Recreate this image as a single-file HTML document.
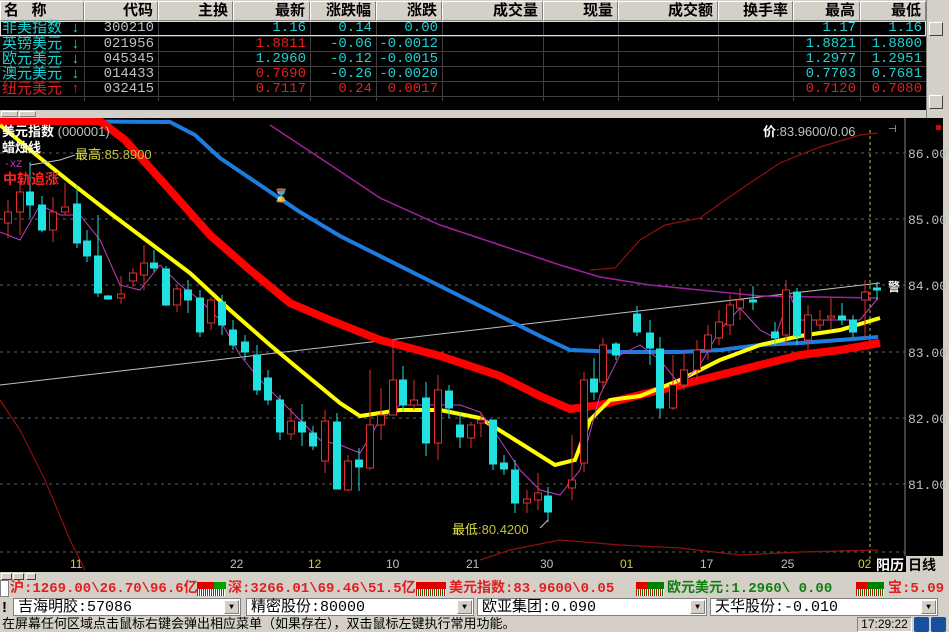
<!DOCTYPE html>
<html><head><meta charset="utf-8"><style>
*{margin:0;padding:0;box-sizing:border-box}
body{width:949px;height:632px;overflow:hidden;background:#d4d0c8;font-family:"Liberation Sans","Noto Sans CJK SC",sans-serif;position:relative}
.abs{position:absolute}
.hdr{position:absolute;top:0;left:0;width:926px;height:21px;background:#d4d0c8}
.hc{position:absolute;top:1px;height:20px;border-right:1px solid #808080;border-bottom:1px solid #808080;border-left:1px solid #fff;border-top:1px solid #fff;font-size:15px;font-weight:bold;color:#000;text-align:right;padding-right:4px;line-height:18px;font-family:"Liberation Sans","Noto Sans CJK SC",sans-serif}
.tbl{position:absolute;top:21px;left:0;width:926px;height:89px;background:#000}
.row{position:absolute;left:0;width:926px;height:15px;font-family:"Liberation Mono","Noto Sans CJK SC",monospace;font-size:14px;line-height:15px}
.cell{position:absolute;top:0;text-align:right;padding-right:4px}
.vl{position:absolute;top:0;width:1px;height:80px;background:#404040}
.cy{color:#20d0d0}.rd{color:#e02020}.gy{color:#c0c0c0}
.tk{position:absolute;top:580px;height:18px;font-family:"Liberation Mono","Noto Sans CJK SC",monospace;font-size:14px;font-weight:bold;line-height:18px;white-space:nowrap}
.cb{position:absolute;top:598px;height:18px;background:#fff;border:1px solid #808080;font-size:15px;line-height:17px;padding-left:4px;font-family:"Liberation Mono","Noto Sans CJK SC",monospace}
.dd{position:absolute;top:1px;right:1px;width:15px;height:14px;background:#d4d0c8;border:1px solid #fff;border-right-color:#808080;border-bottom-color:#808080;font-size:8px;text-align:center;line-height:13px}
</style></head><body>
<div class="hdr">
<div class="hc" style="left:0;width:84px;text-align:left;padding-left:3px">名&nbsp;&nbsp;&nbsp;称</div>
<div class="hc" style="left:84px;width:74px">代码</div>
<div class="hc" style="left:158px;width:75px">主换</div>
<div class="hc" style="left:233px;width:77px">最新</div>
<div class="hc" style="left:310px;width:66px">涨跌幅</div>
<div class="hc" style="left:376px;width:66px">涨跌</div>
<div class="hc" style="left:442px;width:101px">成交量</div>
<div class="hc" style="left:543px;width:75px">现量</div>
<div class="hc" style="left:618px;width:100px">成交额</div>
<div class="hc" style="left:718px;width:75px">换手率</div>
<div class="hc" style="left:793px;width:67px">最高</div>
<div class="hc" style="left:860px;width:66px">最低</div>
</div>
<div class="abs" style="left:926px;top:0;width:23px;height:118px;background:#d4d0c8;border-left:1px solid #808080"></div>
<div class="abs" style="left:929px;top:22px;width:14px;height:14px;background:#d4d0c8;border:1px solid #fff;border-right-color:#404040;border-bottom-color:#404040"></div>
<div class="abs" style="left:929px;top:95px;width:14px;height:14px;background:#d4d0c8;border:1px solid #fff;border-right-color:#404040;border-bottom-color:#404040"></div>
<div class="tbl">
<div class="vl" style="left:84px"></div><div class="vl" style="left:158px"></div><div class="vl" style="left:233px"></div><div class="vl" style="left:310px"></div><div class="vl" style="left:376px"></div><div class="vl" style="left:442px"></div><div class="vl" style="left:543px"></div><div class="vl" style="left:618px"></div><div class="vl" style="left:718px"></div><div class="vl" style="left:793px"></div><div class="vl" style="left:860px"></div>
<div class="abs" style="left:0;top:0;width:926px;height:15px;border:1px solid #e0e0e0"></div>
<div class="abs" style="left:0;top:15px;width:926px;height:1px;background:#404040"></div>
<div class="abs" style="left:0;top:30px;width:926px;height:1px;background:#404040"></div>
<div class="abs" style="left:0;top:45px;width:926px;height:1px;background:#404040"></div>
<div class="abs" style="left:0;top:60px;width:926px;height:1px;background:#404040"></div>
<div class="abs" style="left:0;top:75px;width:926px;height:1px;background:#404040"></div>
<div class="row" style="top:0"><span class="cell cy" style="left:0;text-align:left;padding-left:2px;font-size:15px">非美指数 ↓</span><span class="cell gy" style="left:84px;width:74px">300210</span><span class="cell cy" style="left:233px;width:77px">1.16</span><span class="cell cy" style="left:310px;width:66px">0.14</span><span class="cell cy" style="left:376px;width:66px">0.00</span><span class="cell cy" style="left:793px;width:67px">1.17</span><span class="cell cy" style="left:860px;width:66px">1.16</span></div>
<div class="row" style="top:16px"><span class="cell cy" style="left:0;text-align:left;padding-left:2px;font-size:15px">英镑美元 ↓</span><span class="cell gy" style="left:84px;width:74px">021956</span><span class="cell rd" style="left:233px;width:77px">1.8811</span><span class="cell cy" style="left:310px;width:66px">-0.06</span><span class="cell cy" style="left:376px;width:66px">-0.0012</span><span class="cell cy" style="left:793px;width:67px">1.8821</span><span class="cell cy" style="left:860px;width:66px">1.8800</span></div>
<div class="row" style="top:31px"><span class="cell cy" style="left:0;text-align:left;padding-left:2px;font-size:15px">欧元美元 ↓</span><span class="cell gy" style="left:84px;width:74px">045345</span><span class="cell cy" style="left:233px;width:77px">1.2960</span><span class="cell cy" style="left:310px;width:66px">-0.12</span><span class="cell cy" style="left:376px;width:66px">-0.0015</span><span class="cell cy" style="left:793px;width:67px">1.2977</span><span class="cell cy" style="left:860px;width:66px">1.2951</span></div>
<div class="row" style="top:46px"><span class="cell cy" style="left:0;text-align:left;padding-left:2px;font-size:15px">澳元美元 ↓</span><span class="cell gy" style="left:84px;width:74px">014433</span><span class="cell rd" style="left:233px;width:77px">0.7690</span><span class="cell cy" style="left:310px;width:66px">-0.26</span><span class="cell cy" style="left:376px;width:66px">-0.0020</span><span class="cell cy" style="left:793px;width:67px">0.7703</span><span class="cell cy" style="left:860px;width:66px">0.7681</span></div>
<div class="row" style="top:61px"><span class="cell rd" style="left:0;text-align:left;padding-left:2px;font-size:15px">纽元美元 ↑</span><span class="cell gy" style="left:84px;width:74px">032415</span><span class="cell rd" style="left:233px;width:77px">0.7117</span><span class="cell rd" style="left:310px;width:66px">0.24</span><span class="cell rd" style="left:376px;width:66px">0.0017</span><span class="cell rd" style="left:793px;width:67px">0.7120</span><span class="cell rd" style="left:860px;width:66px">0.7080</span></div>
</div>
<div class="abs" style="left:0;top:110px;width:926px;height:8px;background:#d4d0c8"></div>
<div class="abs" style="left:1px;top:111px;width:17px;height:6px;background:#d4d0c8;border:1px solid #fff;border-right-color:#808080;border-bottom-color:#808080"></div>
<div class="abs" style="left:19px;top:111px;width:17px;height:6px;background:#d4d0c8;border:1px solid #fff;border-right-color:#808080;border-bottom-color:#808080"></div>

<svg class="abs" style="left:0;top:118px" width="949" height="454" viewBox="0 118 949 454">
<rect x="0" y="118" width="943" height="454" fill="#000"/>
<rect x="943" y="118" width="6" height="454" fill="#d4d0c8"/>
<g stroke="#606060" stroke-dasharray="3,4" stroke-width="1">
<line x1="0" y1="153" x2="905" y2="153"/><line x1="0" y1="219" x2="905" y2="219"/><line x1="0" y1="285" x2="905" y2="285"/><line x1="0" y1="352" x2="905" y2="352"/><line x1="0" y1="418" x2="905" y2="418"/><line x1="0" y1="484" x2="905" y2="484"/>
<line x1="0" y1="552" x2="905" y2="552"/>
</g>
<line x1="905" y1="118" x2="905" y2="572" stroke="#808080"/>
<g fill="#c0c0c0" font-family="Liberation Mono,monospace" font-size="13">
<text x="908" y="158">86.00</text><text x="908" y="224">85.00</text><text x="908" y="290">84.00</text><text x="908" y="357">83.00</text><text x="908" y="423">82.00</text><text x="908" y="489">81.00</text>
</g>
<line x1="870" y1="130" x2="870" y2="560" stroke="#c0c060" stroke-dasharray="3,3"/>
<g fill="none" stroke="#901010" stroke-width="1.2">
<polyline points="590,270 615,268 640,240 665,225 700,218 725,200 750,183 780,163 820,147 860,135 878,133"/>
<polyline points="0,400 20,430 45,480 70,540 85,570"/>
<polyline points="480,560 510,550 560,540 620,545 680,548 740,555 800,552 878,550"/>
</g>
<line x1="0" y1="385" x2="880" y2="283" stroke="#c0c0c0" stroke-width="1"/>
<polyline fill="none" stroke="#a020a0" stroke-width="1.5" points="270,125 320,158 380,198 440,225 500,245 560,265 600,277 650,285 700,290 760,296 878,298"/>
<polyline fill="none" stroke="#1c7ce0" stroke-width="4" points="0,121 170,122 195,135 220,158 260,185 300,212 340,236 380,256 420,276 460,296 500,316 540,336 570,350 620,352 680,352 720,350 760,345 800,343 840,340 878,337"/>
<polyline fill="none" stroke="#ff0000" stroke-width="8" points="0,121 100,121 125,140 170,190 210,235 250,270 290,303 330,320 380,340 440,356 500,376 540,396 570,409 600,405 640,395 680,385 720,375 760,365 800,355 840,350 880,343"/>
<polyline fill="none" stroke="#ffff00" stroke-width="4" points="0,125 40,158 70,182 110,213 150,243 190,273 230,310 270,345 300,370 340,403 360,416 400,410 440,410 480,418 520,443 555,465 575,460 590,420 610,400 640,396 680,380 720,360 760,345 800,336 840,330 880,318"/>
<polyline fill="none" stroke="#c040c0" stroke-width="1" points="0,232 20,240 40,205 60,215 80,215 100,240 120,285 140,290 160,265 180,285 200,300 220,320 240,355 260,380 280,400 300,420 320,440 340,445 360,453 380,420 400,405 420,405 440,405 460,405 480,412 500,440 520,470 540,490 560,495 580,470 600,395 620,355 640,345 660,360 680,385 700,365 720,330 740,308 760,330 775,338 790,295 800,320 820,320 840,320 860,320 878,298"/>
<g stroke-width="1">
<g stroke="#e03030" fill="#000">
<line x1="8" y1="200" x2="8" y2="238"/><rect x="4.5" y="212" width="7" height="11"/>
<line x1="20" y1="180" x2="20" y2="235"/><rect x="16.5" y="192" width="7" height="20"/>
<line x1="53" y1="197" x2="53" y2="242"/><rect x="49.5" y="212" width="7" height="18"/>
<line x1="65" y1="183" x2="65" y2="215"/><rect x="61.5" y="207" width="7" height="5"/>
<line x1="121" y1="276" x2="121" y2="304"/><rect x="117.5" y="294" width="7" height="4"/>
<line x1="133" y1="268" x2="133" y2="287"/><rect x="129.5" y="273" width="7" height="8"/>
<line x1="144" y1="245" x2="144" y2="290"/><rect x="140.5" y="263" width="7" height="12"/>
<line x1="177" y1="285" x2="177" y2="312"/><rect x="173.5" y="289" width="7" height="16"/>
<line x1="211" y1="297" x2="211" y2="330"/><rect x="207.5" y="300" width="7" height="23"/>
<line x1="291" y1="408" x2="291" y2="440"/><rect x="287.5" y="421" width="7" height="13"/>
<line x1="325" y1="410" x2="325" y2="473"/><rect x="321.5" y="421" width="7" height="40"/>
<line x1="348" y1="455" x2="348" y2="491"/><rect x="344.5" y="461" width="7" height="29"/>
<line x1="370" y1="370" x2="370" y2="470"/><rect x="366.5" y="425" width="7" height="43"/>
<line x1="381" y1="388" x2="381" y2="440"/><rect x="377.5" y="415" width="7" height="10"/>
<line x1="393" y1="340" x2="393" y2="415"/><rect x="389.5" y="380" width="7" height="35"/>
<line x1="414" y1="380" x2="414" y2="410"/><rect x="410.5" y="400" width="7" height="5"/>
<line x1="438" y1="375" x2="438" y2="460"/><rect x="434.5" y="390" width="7" height="53"/>
<line x1="471" y1="422" x2="471" y2="448"/><rect x="467.5" y="425" width="7" height="13"/>
<line x1="481" y1="412" x2="481" y2="437"/><rect x="477.5" y="420" width="7" height="3"/>
<line x1="527" y1="490" x2="527" y2="513"/><rect x="523.5" y="499" width="7" height="4"/>
<line x1="538" y1="473" x2="538" y2="510"/><rect x="534.5" y="493" width="7" height="7"/>
<line x1="572" y1="435" x2="572" y2="500"/><rect x="568.5" y="480" width="7" height="8"/>
<line x1="584" y1="372" x2="584" y2="472"/><rect x="580.5" y="380" width="7" height="83"/>
<line x1="603" y1="338" x2="603" y2="390"/><rect x="599.5" y="345" width="7" height="37"/>
<line x1="673" y1="355" x2="673" y2="410"/><rect x="669.5" y="385" width="7" height="23"/>
<line x1="684" y1="350" x2="684" y2="390"/><rect x="680.5" y="370" width="7" height="15"/>
<line x1="697" y1="340" x2="697" y2="380"/><rect x="693.5" y="350" width="7" height="20"/>
<line x1="708" y1="325" x2="708" y2="360"/><rect x="704.5" y="335" width="7" height="15"/>
<line x1="719" y1="310" x2="719" y2="345"/><rect x="715.5" y="322" width="7" height="16"/>
<line x1="730" y1="295" x2="730" y2="335"/><rect x="726.5" y="305" width="7" height="20"/>
<line x1="740" y1="288" x2="740" y2="320"/><rect x="736.5" y="300" width="7" height="8"/>
<line x1="786" y1="280" x2="786" y2="345"/><rect x="782.5" y="290" width="7" height="45"/>
<line x1="808" y1="305" x2="808" y2="350"/><rect x="804.5" y="315" width="7" height="25"/>
<line x1="820" y1="310" x2="820" y2="330"/><rect x="816.5" y="320" width="7" height="5"/>
<line x1="831" y1="298" x2="831" y2="330"/><rect x="827.5" y="316" width="7" height="2"/>
<line x1="865" y1="280" x2="865" y2="340"/><rect x="861.5" y="292" width="7" height="8"/>
</g>
<g stroke="#20e0e0" fill="#20e0e0">
<line x1="30" y1="162" x2="30" y2="218"/><rect x="26.5" y="192" width="7" height="13"/>
<line x1="42" y1="196" x2="42" y2="232"/><rect x="38.5" y="205" width="7" height="25"/>
<line x1="77" y1="185" x2="77" y2="248"/><rect x="73.5" y="204" width="7" height="39"/>
<line x1="87" y1="230" x2="87" y2="262"/><rect x="83.5" y="241" width="7" height="15"/>
<line x1="98" y1="215" x2="98" y2="297"/><rect x="94.5" y="256" width="7" height="37"/>
<line x1="108" y1="295" x2="108" y2="300"/><rect x="104.5" y="296" width="7" height="3"/>
<line x1="154" y1="250" x2="154" y2="272"/><rect x="150.5" y="263" width="7" height="5"/>
<line x1="166" y1="266" x2="166" y2="306"/><rect x="162.5" y="269" width="7" height="36"/>
<line x1="188" y1="280" x2="188" y2="313"/><rect x="184.5" y="290" width="7" height="10"/>
<line x1="200" y1="290" x2="200" y2="337"/><rect x="196.5" y="298" width="7" height="34"/>
<line x1="222" y1="295" x2="222" y2="335"/><rect x="218.5" y="302" width="7" height="23"/>
<line x1="233" y1="320" x2="233" y2="350"/><rect x="229.5" y="330" width="7" height="15"/>
<line x1="245" y1="335" x2="245" y2="360"/><rect x="241.5" y="342" width="7" height="10"/>
<line x1="257" y1="345" x2="257" y2="395"/><rect x="253.5" y="355" width="7" height="35"/>
<line x1="268" y1="370" x2="268" y2="405"/><rect x="264.5" y="378" width="7" height="22"/>
<line x1="280" y1="395" x2="280" y2="440"/><rect x="276.5" y="400" width="7" height="32"/>
<line x1="302" y1="404" x2="302" y2="446"/><rect x="298.5" y="422" width="7" height="10"/>
<line x1="313" y1="426" x2="313" y2="450"/><rect x="309.5" y="433" width="7" height="13"/>
<line x1="337" y1="413" x2="337" y2="489"/><rect x="333.5" y="422" width="7" height="67"/>
<line x1="359" y1="448" x2="359" y2="491"/><rect x="355.5" y="460" width="7" height="7"/>
<line x1="403" y1="366" x2="403" y2="412"/><rect x="399.5" y="380" width="7" height="25"/>
<line x1="426" y1="382" x2="426" y2="456"/><rect x="422.5" y="398" width="7" height="45"/>
<line x1="449" y1="385" x2="449" y2="418"/><rect x="445.5" y="391" width="7" height="17"/>
<line x1="460" y1="412" x2="460" y2="448"/><rect x="456.5" y="425" width="7" height="12"/>
<line x1="493" y1="420" x2="493" y2="470"/><rect x="489.5" y="420" width="7" height="44"/>
<line x1="504" y1="455" x2="504" y2="475"/><rect x="500.5" y="463" width="7" height="6"/>
<line x1="515" y1="460" x2="515" y2="513"/><rect x="511.5" y="470" width="7" height="33"/>
<line x1="548" y1="487" x2="548" y2="522"/><rect x="544.5" y="496" width="7" height="16"/>
<line x1="594" y1="358" x2="594" y2="400"/><rect x="590.5" y="379" width="7" height="13"/>
<line x1="616" y1="342" x2="616" y2="360"/><rect x="612.5" y="344" width="7" height="11"/>
<line x1="637" y1="306" x2="637" y2="336"/><rect x="633.5" y="314" width="7" height="18"/>
<line x1="650" y1="320" x2="650" y2="365"/><rect x="646.5" y="333" width="7" height="15"/>
<line x1="660" y1="337" x2="660" y2="418"/><rect x="656.5" y="349" width="7" height="59"/>
<line x1="753" y1="286" x2="753" y2="310"/><rect x="749.5" y="300" width="7" height="2"/>
<line x1="775" y1="322" x2="775" y2="345"/><rect x="771.5" y="332" width="7" height="6"/>
<line x1="797" y1="288" x2="797" y2="345"/><rect x="793.5" y="292" width="7" height="44"/>
<line x1="842" y1="303" x2="842" y2="325"/><rect x="838.5" y="316" width="7" height="4"/>
<line x1="853" y1="315" x2="853" y2="337"/><rect x="849.5" y="320" width="7" height="12"/>
<line x1="877" y1="282" x2="877" y2="300"/><rect x="873.5" y="288" width="7" height="2"/>
</g>
</g>
<text x="2" y="136" fill="#fff" font-size="13" font-weight="bold" font-family="Liberation Sans,Noto Sans CJK SC,sans-serif">美元指数 <tspan font-weight="normal" fill="#c0c0c0">(000001)</tspan></text>
<text x="2" y="152" fill="#fff" font-size="13" font-weight="bold" font-family="Liberation Sans,Noto Sans CJK SC,sans-serif">蜡烛线</text>
<text x="4" y="167" fill="#c040c0" font-size="10" font-family="Liberation Mono,monospace">-XZ</text>
<text x="3" y="184" fill="#ff2020" font-size="14" font-weight="bold" font-family="Liberation Sans,Noto Sans CJK SC,sans-serif">中轨追涨</text>
<polyline points="30,165 60,160 75,155" fill="none" stroke="#c0c0c0"/>
<text x="75" y="159" fill="#e0e040" font-size="13" font-family="Liberation Sans,Noto Sans CJK SC,sans-serif">最高<tspan fill="#c0c040">:85.8900</tspan></text>
<text x="452" y="534" fill="#e0e040" font-size="13" font-family="Liberation Sans,Noto Sans CJK SC,sans-serif">最低<tspan fill="#c0c040">:80.4200</tspan></text>
<line x1="540" y1="528" x2="548" y2="520" stroke="#c0c0c0"/>
<text x="763" y="136" fill="#fff" font-size="13" font-family="Liberation Sans,Noto Sans CJK SC,sans-serif"><tspan font-weight="bold">价</tspan><tspan fill="#c0c0c0">:83.9600/0.06</tspan></text>
<text x="888" y="132" fill="#c0c0c0" font-size="10">⊣</text>
<rect x="936" y="125" width="5" height="5" fill="#e00000"/>
<text x="888" y="291" fill="#fff" font-size="12" font-weight="bold" font-family="Noto Sans CJK SC,sans-serif">警</text>
<text x="273" y="200" fill="#fff" font-size="13">⌛</text>
<g font-family="Liberation Sans,sans-serif" font-size="12">
<text x="70" y="568" fill="#d0d040">11</text><text x="230" y="568" fill="#c0c0c0">22</text><text x="308" y="568" fill="#d0d040">12</text><text x="386" y="568" fill="#c0c0c0">10</text><text x="466" y="568" fill="#c0c0c0">21</text><text x="540" y="568" fill="#c0c0c0">30</text><text x="620" y="568" fill="#d0d040">01</text><text x="700" y="568" fill="#c0c0c0">17</text><text x="781" y="568" fill="#c0c0c0">25</text><text x="858" y="568" fill="#d0d040">02</text>
</g>
<rect x="875" y="556" width="31" height="16" fill="#000"/>
<text x="876" y="570" fill="#fff" font-size="14" font-weight="bold" font-family="Noto Sans CJK SC,sans-serif">阳历</text>
<rect x="906" y="556" width="37" height="16" fill="#d4d0c8"/>
<text x="908" y="570" fill="#000" font-size="14" font-weight="bold" font-family="Noto Sans CJK SC,sans-serif">日线</text>
</svg>

<div class="abs" style="left:1px;top:573px;width:11px;height:7px;background:#d4d0c8;border:1px solid #fff;border-right-color:#404040;border-bottom-color:#404040"></div>
<div class="abs" style="left:13px;top:573px;width:11px;height:7px;background:#d4d0c8;border:1px solid #fff;border-right-color:#404040;border-bottom-color:#404040"></div>
<div class="abs" style="left:26px;top:573px;width:10px;height:7px;background:#d4d0c8;border:1px solid #fff;border-right-color:#404040;border-bottom-color:#404040"></div>

<div class="abs" style="left:0;top:580px;width:9px;height:17px;border:1px solid #808080;background:#fff"></div>
<div class="tk" style="left:10px;color:#e02020">沪:1269.00\26.70\96.6亿</div>
<div class="abs" style="left:197px;top:582px;width:28px;height:14px;background:linear-gradient(#e00000 0 50%,transparent 50%),repeating-linear-gradient(90deg,#e00000 0 1px,#fff 1px 2px,#008000 2px 3px,#fff 3px 4px)"></div>
<div class="abs" style="left:214px;top:582px;width:12px;height:7px;background:#00a000"></div>
<div class="tk" style="left:228px;color:#e02020">深:3266.01\69.46\51.5亿</div>
<div class="abs" style="left:416px;top:582px;width:30px;height:14px;background:linear-gradient(#e00000 0 50%,transparent 50%),repeating-linear-gradient(90deg,#e00000 0 1px,#fff 1px 2px,#008000 2px 3px,#fff 3px 4px)"></div>
<div class="tk" style="left:449px;color:#e02020">美元指数:83.9600\0.05</div>
<div class="abs" style="left:636px;top:582px;width:28px;height:14px;background:linear-gradient(90deg,#e00000 0 40%,#008000 40%);"></div>
<div class="abs" style="left:636px;top:589px;width:28px;height:7px;background:repeating-linear-gradient(90deg,#e00000 0 1px,#fff 1px 2px,#008000 2px 3px,#fff 3px 4px)"></div>
<div class="tk" style="left:667px;color:#108010">欧元美元:1.2960\ 0.00</div>
<div class="abs" style="left:856px;top:582px;width:28px;height:14px;background:linear-gradient(90deg,#e00000 0 40%,#008000 40%);"></div>
<div class="abs" style="left:856px;top:589px;width:28px;height:7px;background:repeating-linear-gradient(90deg,#e00000 0 1px,#fff 1px 2px,#008000 2px 3px,#fff 3px 4px)"></div>
<div class="tk" style="left:888px;color:#e02020">宝:5.09</div>

<div class="abs" style="left:2px;top:599px;font-size:15px;font-weight:bold">!</div>
<div class="cb" style="left:13px;width:228px">吉海明胶:57086<div class="dd">▼</div></div>
<div class="cb" style="left:246px;width:228px">精密股份:80000<div class="dd">▼</div></div>
<div class="cb" style="left:477px;width:230px">欧亚集团:0.090<div class="dd">▼</div></div>
<div class="cb" style="left:710px;width:228px">天华股份:-0.010<div class="dd">▼</div></div>

<div class="abs" style="left:2px;top:616px;font-size:13px;line-height:16px;color:#000;font-family:'Liberation Sans','Noto Sans CJK SC',sans-serif">在屏幕任何区域点击鼠标右键会弹出相应菜单（如果存在），双击鼠标左键执行常用功能。</div>
<div class="abs" style="left:857px;top:617px;width:55px;height:15px;border:1px solid #808080;border-right-color:#fff;border-bottom-color:#fff;font-size:12px;line-height:13px;text-align:center">17:29:22</div>
<div class="abs" style="left:914px;top:617px;width:15px;height:15px;background:#1850a0;border-radius:2px"></div>
<div class="abs" style="left:931px;top:617px;width:15px;height:15px;background:#1850a0;border-radius:2px"></div>
</body></html>
